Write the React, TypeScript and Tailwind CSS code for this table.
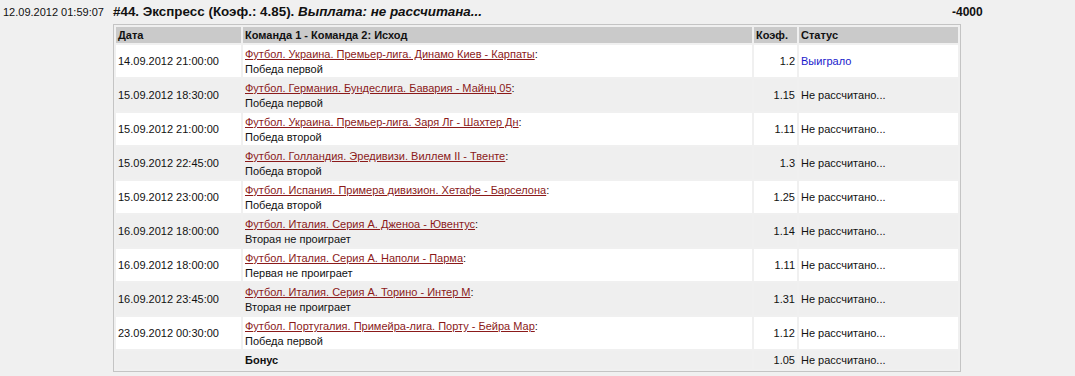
const rows = [
  { date: "14.09.2012 21:00:00", event: "Футбол. Украина. Премьер-лига. Динамо Киев - Карпаты", outcome: "Победа первой", coef: "1.2", status: "Выиграло", won: true },
  { date: "15.09.2012 18:30:00", event: "Футбол. Германия. Бундеслига. Бавария - Майнц 05", outcome: "Победа первой", coef: "1.15", status: "Не рассчитано..." },
  { date: "15.09.2012 21:00:00", event: "Футбол. Украина. Премьер-лига. Заря Лг - Шахтер Дн", outcome: "Победа второй", coef: "1.11", status: "Не рассчитано..." },
  { date: "15.09.2012 22:45:00", event: "Футбол. Голландия. Эредивизи. Виллем II - Твенте", outcome: "Победа второй", coef: "1.3", status: "Не рассчитано..." },
  { date: "15.09.2012 23:00:00", event: "Футбол. Испания. Примера дивизион. Хетафе - Барселона", outcome: "Победа второй", coef: "1.25", status: "Не рассчитано..." },
  { date: "16.09.2012 18:00:00", event: "Футбол. Италия. Серия А. Дженоа - Ювентус", outcome: "Вторая не проиграет", coef: "1.14", status: "Не рассчитано..." },
  { date: "16.09.2012 18:00:00", event: "Футбол. Италия. Серия А. Наполи - Парма", outcome: "Первая не проиграет", coef: "1.11", status: "Не рассчитано..." },
  { date: "16.09.2012 23:45:00", event: "Футбол. Италия. Серия А. Торино - Интер М", outcome: "Вторая не проиграет", coef: "1.31", status: "Не рассчитано..." },
  { date: "23.09.2012 00:30:00", event: "Футбол. Португалия. Примейра-лига. Порту - Бейра Мар", outcome: "Победа первой", coef: "1.12", status: "Не рассчитано..." },
];

export default function App() {
  return (
    <div className="w-[1075px] h-[376px] bg-[#f0f0f0] text-[#111] font-['Liberation_Sans',Arial,sans-serif] overflow-hidden">
      {/* bet header line */}
      <div className="flex items-center h-[24px]">
        <div className="w-[113px] pl-[3px] text-[11px]">12.09.2012 01:59:07</div>
        <div className="w-[839px] text-[13.4px] font-bold">
          #44. Экспресс (Коэф.: 4.85). <i>Выплата: не рассчитана...</i>
        </div>
        <div className="text-[12px] font-bold">-4000</div>
      </div>

      <table className="ml-[113px] w-[848px] border border-[#c4c4c4] border-separate border-spacing-[2px] text-[11px] leading-[14px]">
        <thead>
          <tr className="bg-[#cacaca] h-[16px] font-bold text-left">
            <th className="w-[125px] px-[2px] py-0">Дата</th>
            <th className="px-[2px] py-0">Команда 1 - Команда 2: Исход</th>
            <th className="w-[43px] px-[2px] py-0">Коэф.</th>
            <th className="w-[159px] px-[2px] py-0">Статус</th>
          </tr>
        </thead>
        <tbody>
          {rows.map((r, i) => (
            <tr key={i} className={i % 2 === 0 ? "bg-white h-[32px]" : "bg-[#efefef] h-[32px]"}>
              <td className="px-[2px] align-middle">{r.date}</td>
              <td className="px-[2px] pt-[2px] pb-0 align-top leading-[15px]">
                <a href="#" className="text-[#8b1a1a] underline">{r.event}</a>:
                <br />
                {r.outcome}
              </td>
              <td className="px-[2px] text-right align-middle">{r.coef}</td>
              <td className={r.won ? "px-[2px] align-middle text-[#1a1acc]" : "px-[2px] align-middle"}>{r.status}</td>
            </tr>
          ))}
          <tr className="bg-[#efefef] h-[18px]">
            <td className="px-[2px]"></td>
            <td className="px-[2px] font-bold">Бонус</td>
            <td className="px-[2px] text-right">1.05</td>
            <td className="px-[2px]">Не рассчитано...</td>
          </tr>
        </tbody>
      </table>
    </div>
  );
}
